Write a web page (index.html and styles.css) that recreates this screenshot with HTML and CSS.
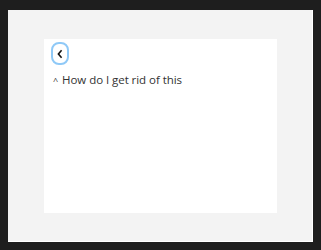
FILE: index.html
```html
<!DOCTYPE html>
<html>
<head>
    <meta charset="utf-8">
    <title>Back</title>
    <link rel="stylesheet" href="styles.css">
</head>
<body>
    <div class="frame">
        <div class="card">
            <button class="back-btn" aria-label="Back">
                <svg width="8" height="10" viewBox="0 0 8 10"><path d="M5.6 1.3 L2.4 5 L5.6 8.7" fill="none" stroke="#111" stroke-width="1.6"/></svg>
            </button>
            <p class="question"><span class="caret">^</span> How do I get rid of this</p>
        </div>
    </div>
</body>
</html>
```
FILE: styles.css
```css
body {
    margin: 0;
    background-color: #1e1e1e;
    font-family: "Open Sans", "DejaVu Sans", sans-serif;
}

.frame {
    margin: 10px 8px 8px 8px;
    height: 232px;
    background-color: #f3f3f3;
    border-right: 1px solid #fff;
    border-bottom: 1px solid #fff;
    box-sizing: border-box;
    padding: 29px 35px 0 36px;
}

.card {
    background-color: #fff;
    height: 174px;
    padding: 3px 7px;
    box-sizing: border-box;
}

.back-btn {
    width: 18px;
    height: 23px;
    padding: 0;
    border: 2px solid #8fc9f7;
    border-radius: 8px;
    background: #fff;
    display: flex;
    align-items: center;
    justify-content: center;
}

.question {
    margin: 7px 0 0 2px;
    font-size: 11.5px;
    color: #333;
    letter-spacing: -0.05px;
}

.caret {
    font-size: 9px;
    margin-right: 1px;
}
```
